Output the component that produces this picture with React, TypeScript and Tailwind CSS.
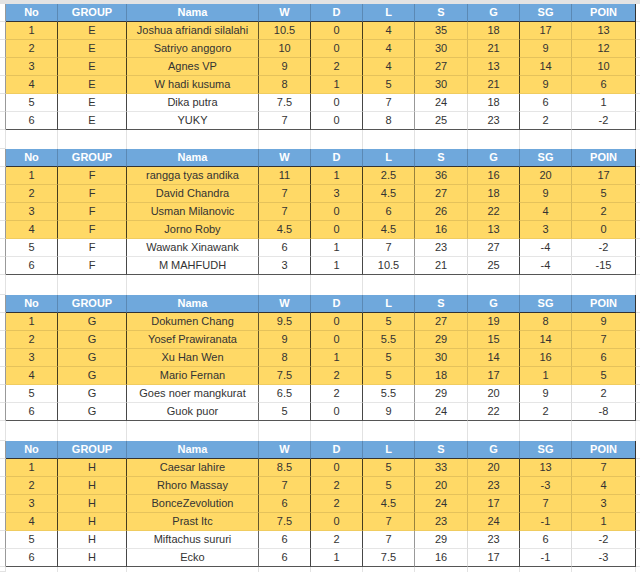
import React from "react";

type R = (string | number)[];

const tables: { g: string; rows: R[] }[] = [
  {
    g: "E",
    rows: [
      ["Joshua afriandi silalahi", 10.5, 0, 4, 35, 18, 17, 13],
      ["Satriyo anggoro", 10, 0, 4, 30, 21, 9, 12],
      ["Agnes VP", 9, 2, 4, 27, 13, 14, 10],
      ["W hadi kusuma", 8, 1, 5, 30, 21, 9, 6],
      ["Dika putra", 7.5, 0, 7, 24, 18, 6, 1],
      ["YUKY", 7, 0, 8, 25, 23, 2, -2],
    ],
  },
  {
    g: "F",
    rows: [
      ["rangga tyas andika", 11, 1, 2.5, 36, 16, 20, 17],
      ["David Chandra", 7, 3, 4.5, 27, 18, 9, 5],
      ["Usman Milanovic", 7, 0, 6, 26, 22, 4, 2],
      ["Jorno Roby", 4.5, 0, 4.5, 16, 13, 3, 0],
      ["Wawank Xinawank", 6, 1, 7, 23, 27, -4, -2],
      ["M MAHFUDH", 3, 1, 10.5, 21, 25, -4, -15],
    ],
  },
  {
    g: "G",
    rows: [
      ["Dokumen Chang", 9.5, 0, 5, 27, 19, 8, 9],
      ["Yosef Prawiranata", 9, 0, 5.5, 29, 15, 14, 7],
      ["Xu Han Wen", 8, 1, 5, 30, 14, 16, 6],
      ["Mario Fernan", 7.5, 2, 5, 18, 17, 1, 5],
      ["Goes noer mangkurat", 6.5, 2, 5.5, 29, 20, 9, 2],
      ["Guok puor", 5, 0, 9, 24, 22, 2, -8],
    ],
  },
  {
    g: "H",
    rows: [
      ["Caesar lahire", 8.5, 0, 5, 33, 20, 13, 7],
      ["Rhoro Massay", 7, 2, 5, 20, 23, -3, 4],
      ["BonceZevolution", 6, 2, 4.5, 24, 17, 7, 3],
      ["Prast Itc", 7.5, 0, 7, 23, 24, -1, 1],
      ["Miftachus sururi", 6, 2, 7, 29, 23, 6, -2],
      ["Ecko", 6, 1, 7.5, 16, 17, -1, -3],
    ],
  },
];

const GRID =
  "grid grid-cols-[6px_52px_69px_132px_52px_52px_52px_53px_52px_52px_64px_4px]";

// border class per column (10 table columns)
const colBorder = [
  "border-r border-r-[rgba(0,0,0,0.72)]",
  "border-r border-r-[rgba(0,0,0,0.72)]",
  "border-r border-r-[rgba(0,0,0,0.6)]",
  "border-r border-r-[rgba(0,0,0,0.72)]",
  "border-r border-r-[rgba(0,0,0,0.72)]",
  "border-r border-r-[rgba(0,0,0,0.4)]",
  "border-r border-r-[rgba(0,0,0,0.14)]",
  "border-r border-r-[rgba(0,0,0,0.72)]",
  "border-r border-r-[rgba(0,0,0,0.14)]",
  "border-r border-r-[rgba(0,0,0,0.75)]",
];

const headers = ["No", "GROUP", "Nama", "W", "D", "L", "S", "G", "SG", "POIN"];

function Spacer({ h }: { h: string }) {
  return (
    <div className={`${GRID} ${h}`}>
      <div className="border-r border-r-[#e2e2e2] border-b border-b-[#e2e2e2]" />
      {headers.map((_, i) => (
        <div key={i} className="border-r border-r-[#e2e2e2]" />
      ))}
      <div />
    </div>
  );
}

function Table({ g, rows }: { g: string; rows: R[] }) {
  return (
    <div>
      <div className={`${GRID} h-[18px]`}>
        <div className="border-r border-r-[#999] border-b border-b-[#e2e2e2]" />
        {headers.map((h, i) => (
          <div
            key={i}
            className={`flex items-center justify-center bg-[#6fa8dc] text-white font-bold border-b border-b-[#333] ${
              i === 9 ? "border-r border-r-[#333]" : "border-r border-r-[rgba(0,0,0,0.18)]"
            }`}
          >
            {h}
          </div>
        ))}
        <div className="border-b border-b-[#e2e2e2]" />
      </div>
      {rows.map((r, ri) => {
        const yellow = ri < 4;
        const last = ri === rows.length - 1;
        const cells = [ri + 1, g, ...r];
        return (
          <div key={ri} className={`${GRID} h-[18px]`}>
            <div className="border-r border-r-[#999] border-b border-b-[#e2e2e2]" />
            {cells.map((c, ci) => (
              <div
                key={ci}
                className={`flex items-center justify-center whitespace-nowrap text-[#333] ${
                  yellow ? "bg-[#ffd966]" : "bg-white"
                } ${colBorder[ci]} ${
                  last
                    ? "border-b border-b-[#555]"
                    : yellow && ri === 3
                    ? "border-b border-b-[rgba(0,0,0,0.06)]"
                    : "border-b border-b-[rgba(0,0,0,0.1)]"
                }`}
              >
                {c}
              </div>
            ))}
            <div className="border-b border-b-[#e2e2e2]" />
          </div>
        );
      })}
    </div>
  );
}

export default function App() {
  return (
    <div className="w-[640px] h-[572px] overflow-hidden bg-white font-['Liberation_Sans',Arial,sans-serif] text-[11px] leading-none">
      <div className="h-[4px] bg-[#e3e3e3]" />
      <Table {...tables[0]} />
      <Spacer h="h-[19px]" />
      <Table {...tables[1]} />
      <Spacer h="h-[20px]" />
      <Table {...tables[2]} />
      <Spacer h="h-[20px]" />
      <Table {...tables[3]} />
      <Spacer h="h-[5px]" />
    </div>
  );
}
